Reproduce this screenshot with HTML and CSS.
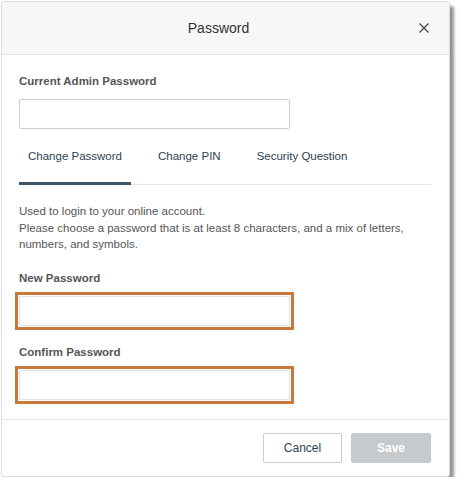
FILE: index.html
```html
<!DOCTYPE html>
<html lang="en">
<head>
<meta charset="utf-8">
<title>Password</title>
<link rel="stylesheet" href="styles.css">
</head>
<body>
<div class="dialog">
  <div class="header">
    <div class="title">Password</div>
    <button class="close" aria-label="Close">
      <svg width="10" height="10" viewBox="0 0 10 10"><path d="M0.5 0.5L9.5 9.5M9.5 0.5L0.5 9.5" stroke="#444" stroke-width="1.2" fill="none"/></svg>
    </button>
  </div>
  <div class="body">
    <label class="label">Current Admin Password</label>
    <input class="input" type="password">
    <div class="tabs">
      <div class="tab active">Change Password</div>
      <div class="tab">Change PIN</div>
      <div class="tab">Security Question</div>
    </div>
    <p class="desc">Used to login to your online account.<br>Please choose a password that is at least 8 characters, and a mix of letters, numbers, and symbols.</p>
    <label class="label">New Password</label>
    <input class="input warn" type="password">
    <label class="label gap">Confirm Password</label>
    <input class="input warn" type="password">
  </div>
  <div class="footer">
    <button class="btn cancel">Cancel</button>
    <button class="btn save">Save</button>
  </div>
</div>
</body>
</html>
```

FILE: styles.css
```css
* { box-sizing: border-box; }
html, body { margin: 0; padding: 0; background: #fff; }
body {
  padding: 1px 0 0 1px;
  font-family: "Liberation Sans", Arial, sans-serif;
  font-size: 11.5px;
  color: #555;
}
.dialog {
  width: 449px;
  height: 476px;
  background: #fff;
  border: 1px solid #dcdcdc;
  border-radius: 3px;
  box-shadow: 4px 5px 3px rgba(0, 0, 0, 0.42);
  display: flex;
  flex-direction: column;
}
.header {
  height: 53px;
  flex: none;
  display: flex;
  align-items: center;
  padding: 0 19px 0 17px;
  background: #f7f7f7;
  border-bottom: 1px solid #e6e6e6;
  border-radius: 3px 3px 0 0;
}
.title {
  flex: 1;
  text-align: center;
  font-size: 14px;
  color: #333;
  line-height: 16px;
}
.close {
  width: 12px;
  height: 12px;
  padding: 0;
  border: 0;
  background: none;
  display: flex;
  align-items: center;
  justify-content: center;
}
.body {
  flex: 1;
  padding: 19px 18px 0 17px;
  display: flex;
  flex-direction: column;
  align-items: flex-start;
}
.label {
  display: block;
  font-weight: bold;
  line-height: 14px;
  color: #555;
  margin-bottom: 11px;
}
.label.gap { margin-top: 19px; }
.input {
  width: 271px;
  height: 30px;
  border: 1px solid #cfcfcf;
  border-radius: 2px;
  background: #fff;
  margin: 0;
}
.input.warn {
  border-radius: 0;
  border-color: #e2e2e2;
  outline: 3px solid #c8783b;
  outline-offset: 1px;
}
.tabs {
  align-self: stretch;
  display: flex;
  gap: 18px;
  margin-top: 10px;
  border-bottom: 1px solid #e6e6e6;
}
.tab {
  padding: 10px 9px 19px;
  line-height: 14px;
  color: #2e3f50;
  margin-bottom: -1px;
  border-bottom: 3px solid transparent;
}
.tab.active { border-bottom-color: #3b536b; }
.desc {
  margin: 18px 0 18px;
  line-height: 16.5px;
  color: #555;
}
.footer {
  flex: none;
  border-top: 1px solid #e6e6e6;
  padding: 13px 18px 0 0;
  height: 57px;
  display: flex;
  justify-content: flex-end;
  gap: 9px;
}
.btn {
  height: 30px;
  font-family: "Liberation Sans", Arial, sans-serif;
  font-size: 12px;
  border-radius: 2px;
  padding: 0;
}
.cancel {
  width: 79px;
  background: #fff;
  border: 1px solid #cccccc;
  color: #2e3f50;
}
.save {
  width: 80px;
  background: #c6cacd;
  border: 1px solid #c6cacd;
  color: #fff;
  font-weight: bold;
}
```
